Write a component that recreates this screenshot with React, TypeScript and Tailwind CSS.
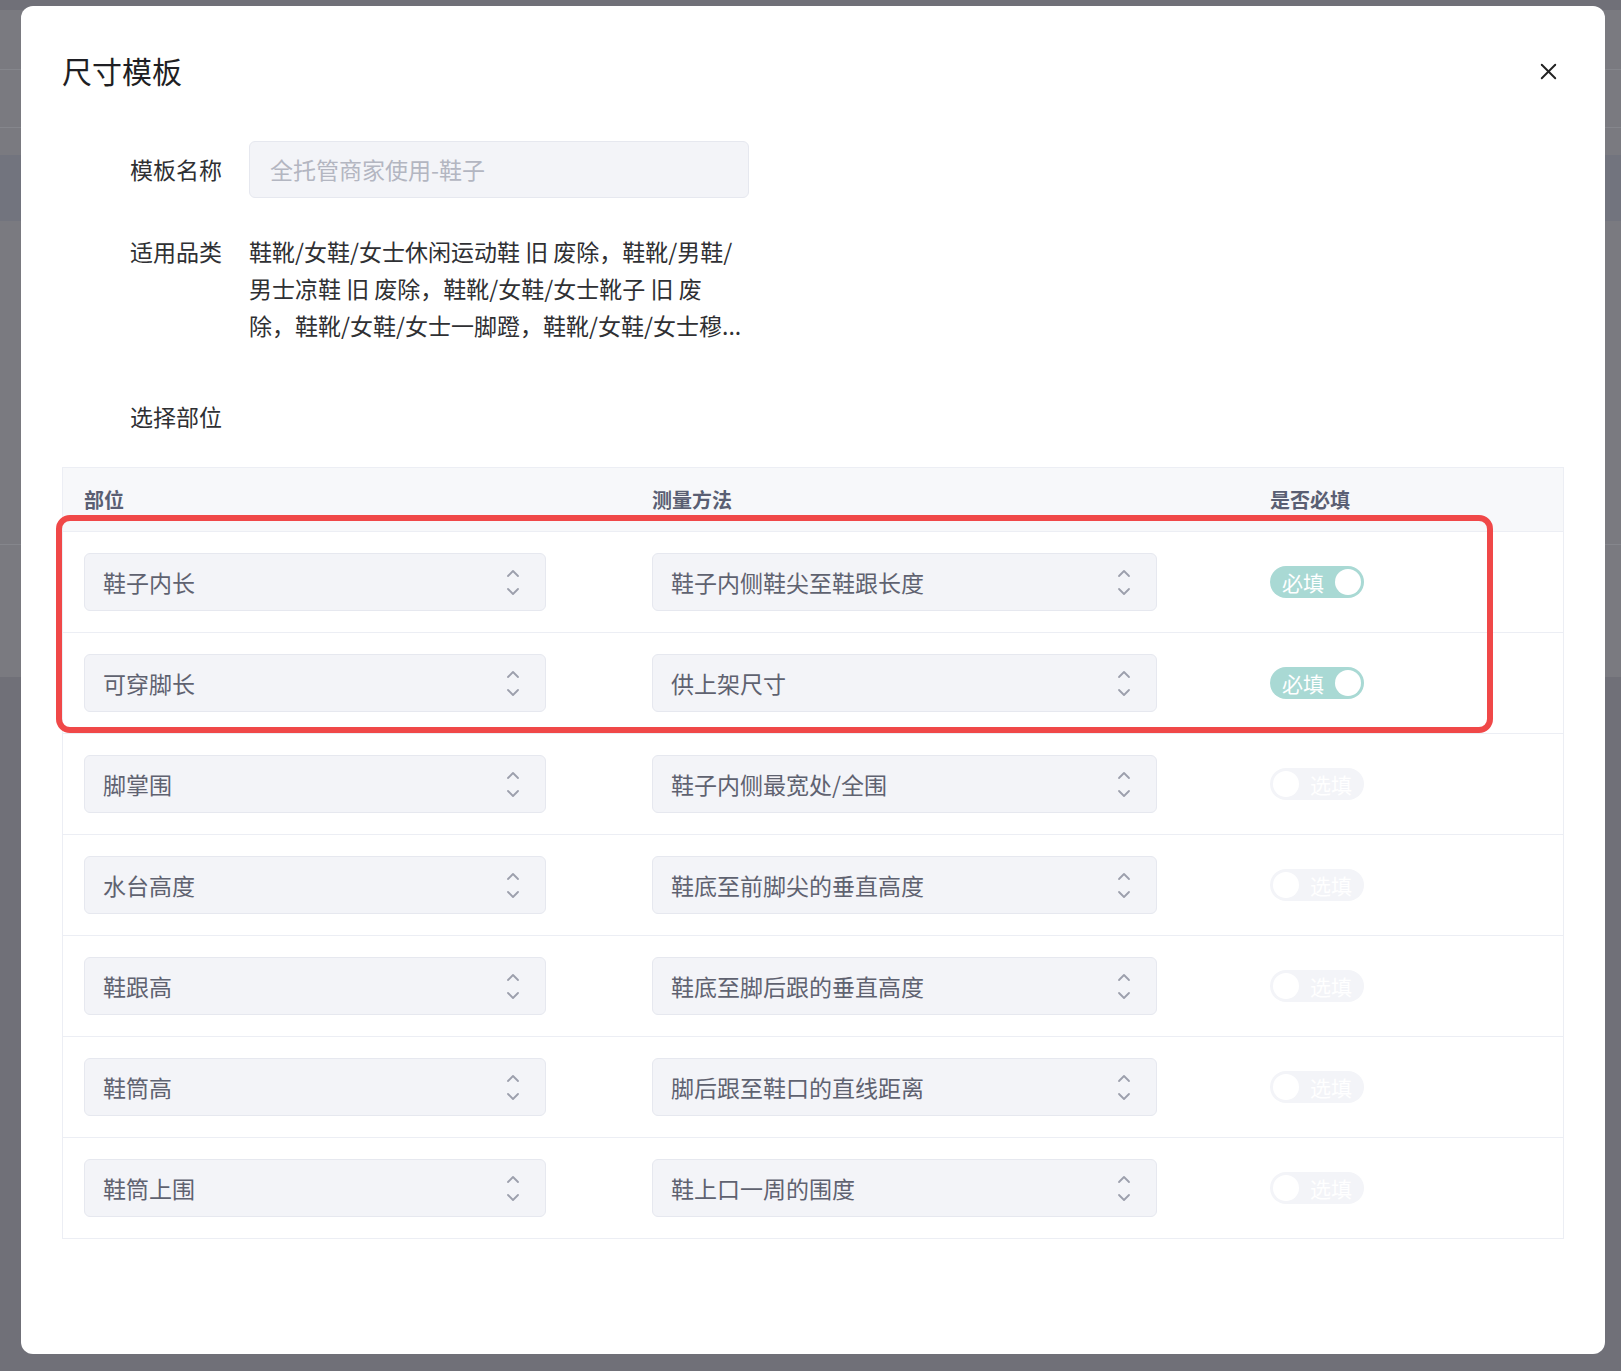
import { X } from 'lucide-react'

// ─── Data ─────────────────────────────────────────────────────────────────────

type Part = {
  name: string
  method: string
  required: boolean
}

const parts: Part[] = [
  { name: '鞋子内长', method: '鞋子内侧鞋尖至鞋跟长度', required: true },
  { name: '可穿脚长', method: '供上架尺寸', required: true },
  { name: '脚掌围', method: '鞋子内侧最宽处/全围', required: false },
  { name: '水台高度', method: '鞋底至前脚尖的垂直高度', required: false },
  { name: '鞋跟高', method: '鞋底至脚后跟的垂直高度', required: false },
  { name: '鞋筒高', method: '脚后跟至鞋口的直线距离', required: false },
  { name: '鞋筒上围', method: '鞋上口一周的围度', required: false },
]

// shown truncated to three lines, as in the dialog
const categoryLines = [
  '鞋靴/女鞋/女士休闲运动鞋 旧 废除，鞋靴/男鞋/',
  '男士凉鞋 旧 废除，鞋靴/女鞋/女士靴子 旧 废',
  '除，鞋靴/女鞋/女士一脚蹬，鞋靴/女鞋/女士穆...',
]

// ─── Pieces ───────────────────────────────────────────────────────────────────

const UpDown = () => (
  <svg width="14" height="34" viewBox="0 0 14 34" fill="none" stroke="#9c9fac" strokeWidth="1.8" strokeLinecap="round" strokeLinejoin="round">
    <path d="M2 11 L7 6 L12 11" />
    <path d="M2 24 L7 29 L12 24" />
  </svg>
)

const SelectBox = ({ value, width }: { value: string; width: string }) => (
  <div className={`flex items-center justify-between h-[58px] ${width} pl-[18px] pr-[25px] rounded-[6px] bg-[#f3f4f8] border border-[#e6e8ef]`}>
    <span className="text-[23px] text-[#5f6270] leading-none">{value}</span>
    <UpDown />
  </div>
)

const Toggle = ({ on }: { on: boolean }) =>
  on ? (
    <div className="flex items-center justify-between w-[94px] h-[32px] rounded-full bg-[#a9d9d4] pl-[12px] pr-[3px]">
      <span className="text-[21px] text-white leading-none">必填</span>
      <span className="w-[26px] h-[26px] rounded-full bg-white" />
    </div>
  ) : (
    <div className="flex items-center justify-between w-[94px] h-[32px] rounded-full bg-[#f3f4f8] pl-[3px] pr-[12px]">
      <span className="w-[26px] h-[26px] rounded-full bg-white" />
      <span className="text-[21px] text-white leading-none">选填</span>
    </div>
  )

// ─── Component ────────────────────────────────────────────────────────────────

const App = () => {
  return (
    <div
      className="relative w-[1621px] h-[1371px] overflow-hidden bg-[#707078]"
      style={{ fontFamily: '"Noto Sans CJK SC", "Noto Sans", sans-serif' }}
    >
      {/* Page behind the overlay */}
      <div className="absolute inset-x-0 top-[10px] h-[667px] bg-[#7a7a80]">
        <div className="h-[60px] border-b border-[#85868c]" />
        <div className="h-[58px] border-b border-[#85868c]" />
        <div className="mt-[27px] h-[66px] bg-[#72747e]" />
        <div className="mt-[323px] border-b border-[#85868c]" />
      </div>

      {/* Modal */}
      <div className="relative ml-[21px] mt-[6px] w-[1584px] h-[1348px] rounded-[12px] bg-white pt-[44px] px-[41px]">
        <div className="flex items-center justify-between h-[40px]">
          <h2 className="text-[30px] text-[#1f1f24] leading-none">尺寸模板</h2>
          <X className="w-[27px] h-[27px] mt-[3px] mr-[2px] text-[#222]" strokeWidth={1.7} />
        </div>

        {/* Form */}
        <div className="mt-[51px] flex flex-col">
          <div className="flex items-center">
            <label className="w-[187px] pr-[27px] text-right text-[23px] text-[#2f3033]">模板名称</label>
            <div className="flex items-center w-[500px] h-[57px] px-[20px] rounded-[6px] bg-[#f3f4f8] border border-[#e6e8ef]">
              <span className="text-[23px] text-[#b3b6c1]">全托管商家使用-鞋子</span>
            </div>
          </div>

          <div className="flex mt-[35px]">
            <label className="w-[187px] pr-[27px] text-right text-[23px] text-[#2f3033] leading-[37px] shrink-0">适用品类</label>
            <div className="flex flex-col text-[23px] text-[#2f3033] leading-[37px] whitespace-nowrap">
              {categoryLines.map((line) => (
                <span key={line}>{line}</span>
              ))}
            </div>
          </div>

          <div className="flex mt-[54px]">
            <label className="w-[187px] pr-[27px] text-right text-[23px] text-[#2f3033] leading-[37px]">选择部位</label>
          </div>
        </div>

        {/* Table */}
        <div className="relative mt-[32px] border border-[#eceef4]">
          <div className="grid grid-cols-[568px_618px_1fr] items-center h-[63px] bg-[#f7f8fa] pl-[21px] text-[20px] font-bold text-[#5a5f73]">
            <span>部位</span>
            <span>测量方法</span>
            <span>是否必填</span>
          </div>

          {parts.map((p) => (
            <div key={p.name} className="grid grid-cols-[568px_618px_1fr] items-center h-[101px] border-t border-[#eceef4] pl-[21px]">
              <SelectBox value={p.name} width="w-[462px]" />
              <SelectBox value={p.method} width="w-[505px]" />
              <Toggle on={p.required} />
            </div>
          ))}

          {/* Highlight */}
          <div className="absolute left-[-7px] top-[47px] w-[1437px] h-[218px] rounded-[14px] border-[6px] border-[#f04848] pointer-events-none" />
        </div>
      </div>
    </div>
  )
}

export default App
